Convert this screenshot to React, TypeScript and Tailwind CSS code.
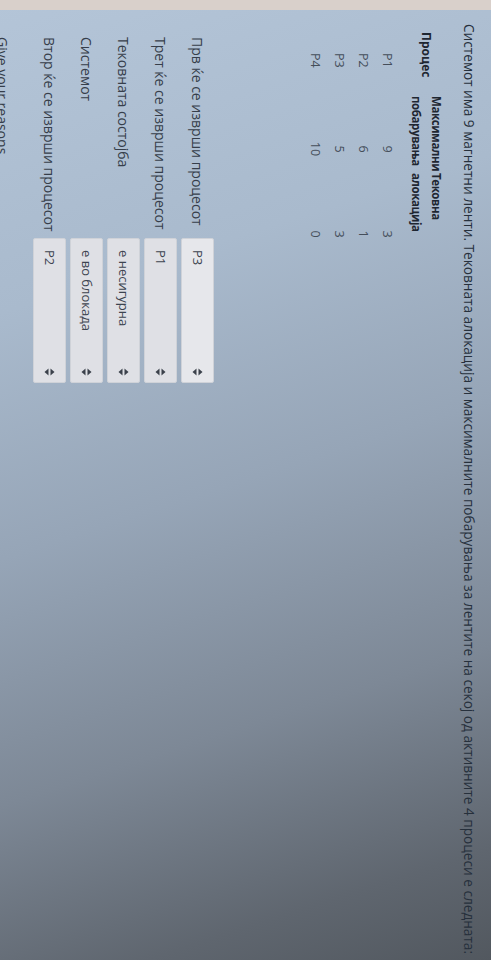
import React from "react";

const rows = [
  { p: "P1", max: "9", cur: "3" },
  { p: "P2", max: "6", cur: "1" },
  { p: "P3", max: "5", cur: "3" },
  { p: "P4", max: "10", cur: "0" },
];

const questions = [
  { label: "Прв ќе се изврши процесот", value: "P3" },
  { label: "Трет ќе се изврши процесот", value: "P1" },
  { label: "Тековната состојба", value: "е несигурна" },
  { label: "Системот", value: "е во блокада" },
  { label: "Втор ќе се изврши процесот", value: "P2" },
];

const Caret = () => (
  <svg width="8" height="11" viewBox="0 0 8 11" className="shrink-0">
    <path d="M4 0.5 L7.5 4.5 L0.5 4.5 Z" fill="#3b414b" />
    <path d="M4 10.5 L7.5 6.5 L0.5 6.5 Z" fill="#3b414b" />
  </svg>
);

export default function App() {
  return (
    <div className="w-[491px] h-[960px] overflow-hidden bg-[linear-gradient(162deg,#b4c5d8_0%,#a9bacd_28%,#96a5b7_50%,#7d8896_72%,#5f666f_90%,#52585f_100%)]">
      {/* the photo is turned a quarter: lay the page out upright, then rotate it */}
      <div
        className="w-[960px] h-[491px] origin-top-left translate-x-[491px] rotate-90 flex"
        style={{ fontFamily: "'Open Sans', 'Noto Sans', sans-serif" }}
      >
        <div className="w-[10px] shrink-0 bg-[#d9d0cb]" />

        <div className="flex-1 flex flex-col pl-[14px]">
          <p className="pt-[12px] text-[13.65px] leading-[20px] text-[#26303c] whitespace-nowrap">
            Системот има 9 магнетни ленти. Тековната алокација и максималните побарувања за лентите на секој од активните 4 процеси е следната:
          </p>

          {/* table */}
          <div className="mt-[13px] ml-[6px] w-[214px]">
            <div className="grid grid-cols-[64px_78px_72px] text-[11.5px] leading-[20px] font-bold tracking-[-0.4px] text-[#1e2631]">
              <div className="flex items-center pl-[2px] text-[12px] tracking-normal">Процес</div>
              <div className="pl-[2px]">
                Максимални
                <br />
                побарувања
              </div>
              <div className="pl-[1px]">
                Тековна
                <br />
                алокација
              </div>
            </div>
            <div className="mt-[7px] flex flex-col text-[12.5px] text-[#454e5a]">
              {rows.map((r) => (
                <div key={r.p} className="grid grid-cols-[64px_72px_74px] h-[24px] items-center">
                  <div className="pl-[23px]">{r.p}</div>
                  <div className="pl-[38px] text-center">{r.max}</div>
                  <div className="pl-[62px] text-center">{r.cur}</div>
                </div>
              ))}
            </div>
          </div>

          {/* questions */}
          <div className="mt-[89px] ml-[13px] flex flex-col gap-[4px]">
            {questions.map((q, i) => (
              <div key={q.label} className="grid grid-cols-[201px_145px] h-[33px] items-center">
                <span className="text-[14px] text-[#363e4a] whitespace-nowrap">{q.label}</span>
                <div
                  className={`h-full flex items-center justify-between pl-[11px] pr-[6px] rounded-[2px] border border-[#cfd2d8] text-[13px] text-[#3d4450] ${
                    i === 0 ? "bg-[#e6e7eb]" : "bg-[#dfe0e5]"
                  }`}
                >
                  <span>{q.value}</span>
                  <Caret />
                </div>
              </div>
            ))}
            <p className="mt-[16px] text-[14px] text-[#363e4a]">Give your reasons</p>
          </div>
        </div>
      </div>
    </div>
  );
}
